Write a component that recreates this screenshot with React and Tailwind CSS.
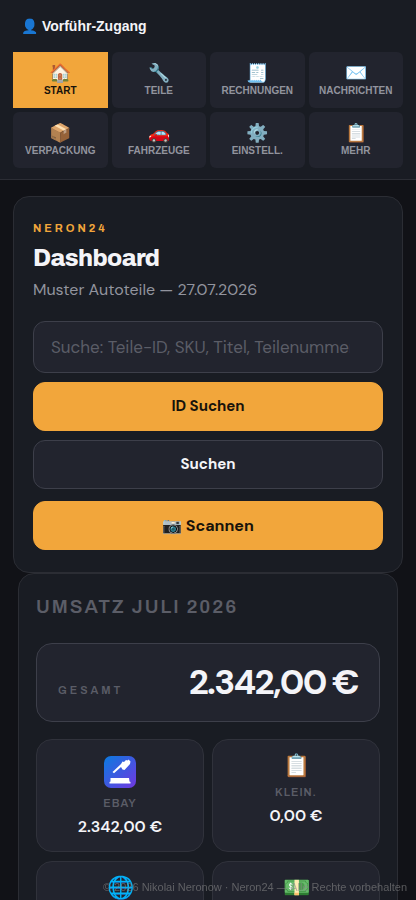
import { useState } from "react";

const navItems = [
  { icon: "🏠", label: "Start" },
  { icon: "🔧", label: "Teile" },
  { icon: "🧾", label: "Rechnungen" },
  { icon: "✉️", label: "Nachrichten" },
  { icon: "📦", label: "Verpackung" },
  { icon: "🚗", label: "Fahrzeuge" },
  { icon: "⚙️", label: "Einstell." },
  { icon: "📋", label: "Mehr" },
];

function GavelIcon() {
  return (
    <svg viewBox="0 0 32 32" className="h-8 w-8" aria-hidden="true">
      <defs>
        <linearGradient id="gavel" x1="0" y1="0" x2="1" y2="1">
          <stop offset="0" stopColor="#0a7be0" />
          <stop offset="1" stopColor="#7137e0" />
        </linearGradient>
      </defs>
      <rect width="32" height="32" rx="7" fill="url(#gavel)" />
      <path d="M8.500 16 17 8l1.500-2.500 1.500.5 2-2 1.500.5L24.500 3.500l2 2-.5 2.500-5.500 6-2-.5-1.500-2.500L10 17.200z" fill="#fff" />
      <path d="M6.500 22h18.500l.5 3.500 1 .5v1.500h-21V26l1-.5z" fill="#fff" />
    </svg>
  );
}

function ChannelCard({ icon, label, value }) {
  return (
    <div className="flex min-h-28 flex-col items-center rounded-2xl border border-[#30323b] bg-[#22242e] px-3 py-3">
      {icon}
      {label && (
        <div className="mt-1 font-[Archivo,'Liberation_Sans',sans-serif] text-[11px] leading-4 font-semibold tracking-[1px] text-[#5b5d67] uppercase">
          {label}
        </div>
      )}
      {value && (
        <div className="mt-1 font-['DM_Sans',Inter,sans-serif] text-base leading-6 font-semibold text-[#f4f4f8]">
          {value}
        </div>
      )}
    </div>
  );
}

function Emoji({ children }) {
  return <span className="flex h-7 items-center text-[22px] leading-7">{children}</span>;
}

export default function App() {
  const [active, setActive] = useState("Start");
  const [query, setQuery] = useState("");

  const buttonClass =
    "h-[49px] w-full rounded-xl border font-['DM_Sans',Inter,sans-serif] font-bold";

  return (
    <div className="h-dvh overflow-y-auto bg-[#111217] font-['Liberation_Sans',Arial,sans-serif] text-[#f4f4f8] [scrollbar-width:none]">
      <header className="border-b border-[#2b2d34] bg-[#191c23] px-[13px] pb-[11px]">
        <div className="flex h-[52px] items-center px-2 text-sm font-bold">👤 Vorführ-Zugang</div>
        <nav className="grid grid-cols-4 gap-1">
          {navItems.map((item) => (
            <button
              key={item.label}
              type="button"
              onClick={() => setActive(item.label)}
              className={
                active === item.label
                  ? "flex h-14 flex-col items-center justify-center bg-[#f2a63b] pb-[3px] text-[#18130b]"
                  : "flex h-14 flex-col items-center justify-center rounded-md bg-[#22242e] pb-[3px] text-[#92949e]"
              }
            >
              <span className="text-lg leading-6">{item.icon}</span>
              <span className="text-[10px] leading-3 font-bold uppercase">{item.label}</span>
            </button>
          ))}
        </nav>
      </header>

      <main className="px-[13px] pt-4">
        <section className="rounded-2xl border border-[#2b2d34] bg-[#191c23] px-[19px] pt-[23px] pb-[22px]">
          <p className="font-[Archivo,'Liberation_Sans',sans-serif] text-[11px] leading-4 font-bold tracking-[3px] text-[#f2a63b]">
            NERON24
          </p>
          <h1 className="mt-2 font-[Archivo,Inter,sans-serif] text-2xl leading-7 font-extrabold tracking-tight">
            Dashboard
          </h1>
          <p className="mt-[6px] font-['DM_Sans',Inter,sans-serif] text-base leading-6 text-[#92949e]">
            Muster Autoteile — 27.07.2026
          </p>

          <form onSubmit={(e) => e.preventDefault()} className="mt-[19px]">
            <input
              type="text"
              aria-label="Suche"
              value={query}
              onChange={(e) => setQuery(e.target.value)}
              placeholder="Suche: Teile-ID, SKU, Titel, Teilenummer"
              className="block h-[52px] w-full rounded-xl border border-[#3d3f4a] bg-[#22242e] pr-8 pl-[17px] font-['DM_Sans',Inter,sans-serif] text-[17px] placeholder-[#5b5d67] focus:outline-none"
            />
            <div className="mt-[9px] space-y-[9px]">
              <button type="submit" className={`${buttonClass} border-[#f2a63b] bg-[#f2a63b] text-[15px] text-[#18130b]`}>
                ID Suchen
              </button>
              <button type="submit" className={`${buttonClass} border-[#3d3f4a] bg-[#22242e] text-[15px]`}>
                Suchen
              </button>
            </div>
            <button type="button" className={`${buttonClass} mt-3 border-[#f2a63b] bg-[#f2a63b] text-base text-[#18130b]`}>
              📷 Scannen
            </button>
          </form>
        </section>

        <section className="mx-[5px] rounded-2xl border border-[#2b2d34] bg-[#191c23] px-[17px] pt-[21px] pb-10">
          <h2 className="font-[Archivo,'Liberation_Sans',sans-serif] text-[19px] leading-6 font-semibold tracking-[2px] text-[#5b5d67] uppercase">
            Umsatz Juli 2026
          </h2>

          <div className="mt-6 flex h-[79px] items-center justify-between rounded-2xl border border-[#3d3f4a] bg-[#22242e] px-[21px]">
            <span className="pt-4 font-[Archivo,'Liberation_Sans',sans-serif] text-[11px] font-semibold tracking-[3px] text-[#5b5d67] uppercase">
              Gesamt
            </span>
            <span className="font-['DM_Sans',Inter,sans-serif] text-[35px] font-bold tracking-[-0.05em]">
              2.342,00 €
            </span>
          </div>

          <div className="mt-[17px] grid grid-cols-2 gap-x-2 gap-y-[9px]">
            <ChannelCard
              icon={
                <span className="flex h-[39px] items-center">
                  <GavelIcon />
                </span>
              }
              label="eBay"
              value="2.342,00 €"
            />
            <ChannelCard icon={<Emoji>📋</Emoji>} label="Klein." value="0,00 €" />
            <ChannelCard icon={<Emoji>🌐</Emoji>} />
            <ChannelCard icon={<Emoji>💵</Emoji>} />
          </div>
        </section>
      </main>

      <footer className="pointer-events-none fixed right-0 bottom-0 px-[9px] pb-[5px] text-[11px] leading-4 text-[#888888]/60">
        © 2026 Nikolai Neronow · Neron24 — Alle Rechte vorbehalten
      </footer>
    </div>
  );
}
